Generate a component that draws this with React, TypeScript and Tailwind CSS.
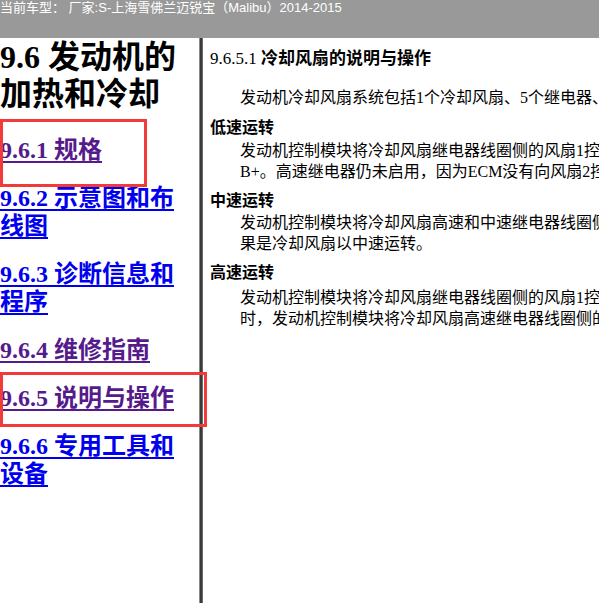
const SERIF = 'font-["Liberation_Serif","Noto_Sans_CJK_SC",serif]';

const LINKS = [
  { num: '9.6.1', text: '规格', visited: true },
  { num: '9.6.2', text: '示意图和布线图', visited: false },
  { num: '9.6.3', text: '诊断信息和程序', visited: false },
  { num: '9.6.4', text: '维修指南', visited: true },
  { num: '9.6.5', text: '说明与操作', visited: true },
  { num: '9.6.6', text: '专用工具和设备', visited: false },
];

const SECTIONS = [
  {
    title: '低速运转',
    mt: 'mt-[9px]',
    pmt: 'mt-[2px]',
    lines: [
      '发动机控制模块将冷却风扇继电器线圈侧的风扇1控制电路搭铁，使冷却风扇低速继电器通电，蓄电池电压通过继电器开关侧和电阻器提供给冷却风扇，冷却风扇以低速运转。低速时冷却风扇电机获得',
      'B+。高速继电器仍未启用，因为ECM没有向风扇2控制电路提供搭铁。',
    ],
  },
  {
    title: '中速运转',
    mt: 'mt-[8px]',
    pmt: 'mt-[1px]',
    lines: [
      '发动机控制模块将冷却风扇高速和中速继电器线圈侧的风扇控制电路搭铁，使冷却风扇继电器通电，蓄电池电压直接提供给冷却风扇，结',
      '果是冷却风扇以中速运转。',
    ],
  },
  {
    title: '高速运转',
    mt: 'mt-[8px]',
    pmt: 'mt-[4px]',
    lines: [
      '发动机控制模块将冷却风扇继电器线圈侧的风扇1控制电路搭铁，使冷却风扇低速继电器通电。同',
      '时，发动机控制模块将冷却风扇高速继电器线圈侧的风扇2控制电路搭铁，冷却风扇以高速运转。',
    ],
  },
];

export default function App() {
  return (
    <div className={`relative w-[599px] h-[603px] overflow-hidden bg-white flex flex-col ${SERIF}`}>
      {/* top bar */}
      <div className='h-[38px] shrink-0 bg-[#999999] text-white text-[13px] leading-[16px] whitespace-nowrap font-["Liberation_Sans","Noto_Sans_CJK_SC",sans-serif]'>
        当前车型： 厂家:S-上海雪佛兰迈锐宝（Malibu）2014-2015
      </div>

      <div className="flex flex-1 min-h-0">
        {/* left frame */}
        <div className="w-[199px] shrink-0 overflow-hidden">
          <div className="w-[190px]">
            <h1 className="mt-[1px] text-[32px] leading-[37px] font-bold text-black">
              9.6 发动机的加热和冷却
            </h1>
            <div className="mt-[23px] flex flex-col gap-[20px]">
              {LINKS.map((l) => (
                <a
                  key={l.num}
                  href="#"
                  className={`block text-[24px] leading-[28px] font-bold underline underline-offset-[3px] ${
                    l.visited ? 'text-[#551a8b]' : 'text-[#0000ee]'
                  }`}
                >
                  {l.num} {l.text}
                </a>
              ))}
            </div>
          </div>
        </div>

        {/* frame divider */}
        <div className="w-[4px] shrink-0 bg-[#3a3a3a] border-l border-l-[#8a8a8a] border-r border-r-[#6a6a6a]" />

        {/* right frame */}
        <div className="flex-1 min-w-0 overflow-hidden pl-[7px] pt-[10px] text-[16px] leading-[21px] text-black whitespace-nowrap">
          <div className="text-[17px]">
            9.6.5.1 <span className="font-bold">冷却风扇的说明与操作</span>
          </div>
          <p className="mt-[18px] pl-[30px]">
            发动机冷却风扇系统包括1个冷却风扇、5个继电器、冷却风扇控制电路及相关线束。
          </p>
          {SECTIONS.map((s) => (
            <div key={s.title} className={s.mt}>
              <div className="font-bold">{s.title}</div>
              <div className={`${s.pmt} pl-[30px]`}>
                {s.lines.map((line, i) => (
                  <div key={i}>{line}</div>
                ))}
              </div>
            </div>
          ))}
        </div>
      </div>

      {/* red highlight boxes */}
      <div className="absolute left-0 top-[119px] w-[147px] h-[68px] border-[3px] border-[#f33a3a]" />
      <div className="absolute left-0 top-[372px] w-[207px] h-[55px] border-[3px] border-[#f33a3a]" />
    </div>
  );
}
